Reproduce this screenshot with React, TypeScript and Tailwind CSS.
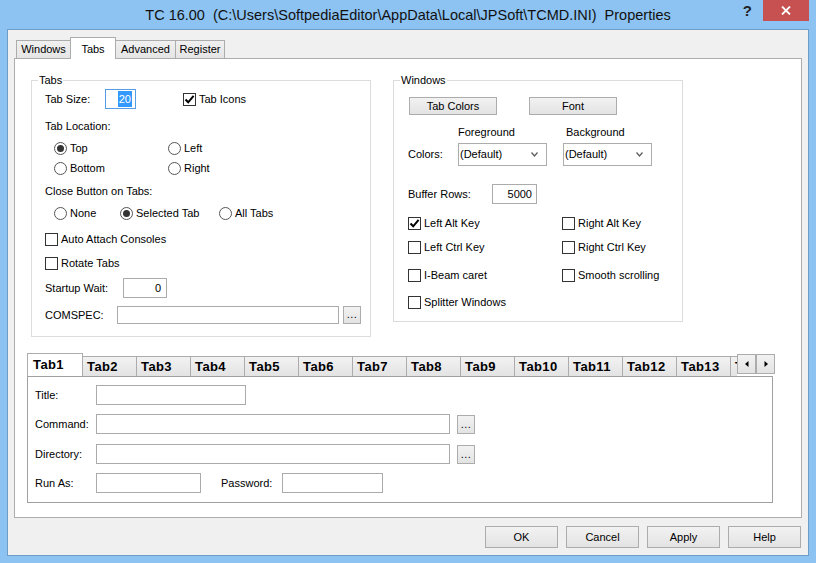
import React from 'react'

const inputCls = 'h-[20px] border border-[#ababab] bg-white'

function Check({ checked }: { checked?: boolean }) {
  return (
    <span className="flex h-[13px] w-[13px] shrink-0 items-center justify-center border border-[#333] bg-white">
      {checked && (
        <svg width="11" height="11" viewBox="0 0 11 11">
          <path d="M1.5 5.5 L4.2 8.3 L9.6 1.8" stroke="#000" strokeWidth="2" fill="none" />
        </svg>
      )}
    </span>
  )
}

function Radio({ checked }: { checked?: boolean }) {
  return (
    <span className="flex h-[13px] w-[13px] shrink-0 items-center justify-center rounded-full border border-[#555] bg-white">
      {checked && <span className="h-[7px] w-[7px] rounded-full bg-[#333]" />}
    </span>
  )
}

function CheckItem({ label, checked, className = '' }: { label: string; checked?: boolean; className?: string }) {
  return (
    <div className={`flex items-center gap-[3px] ${className}`}>
      <Check checked={checked} />
      <span>{label}</span>
    </div>
  )
}

function RadioItem({ label, checked, className = '' }: { label: string; checked?: boolean; className?: string }) {
  return (
    <div className={`flex items-center gap-[3px] ${className}`}>
      <Radio checked={checked} />
      <span>{label}</span>
    </div>
  )
}

function Btn({ children, className = '' }: { children: React.ReactNode; className?: string }) {
  return (
    <div
      className={`flex items-center justify-center border border-[#acacac] bg-linear-to-b from-[#f2f2f2] to-[#e3e3e3] ${className}`}
    >
      {children}
    </div>
  )
}

function Dots({ className = '' }: { className?: string }) {
  return (
    <Btn className={`w-[18px] items-end pb-[3px] leading-none ${className}`}>
      <span className="text-[11px] tracking-[0.5px]">...</span>
    </Btn>
  )
}

function Select({ value }: { value: string }) {
  return (
    <div className="flex h-[23px] w-[89px] items-center justify-between border border-[#acacac] bg-white pl-[1px] pr-[8px]">
      <span>{value}</span>
      <svg width="7" height="5" viewBox="0 0 7 5">
        <path d="M0.5 0.5 L3.5 4 L6.5 0.5" stroke="#606060" strokeWidth="1.3" fill="none" />
      </svg>
    </div>
  )
}

function Group({ title, className, children }: { title: string; className: string; children: React.ReactNode }) {
  return (
    <div className={`relative shrink-0 border border-[#dcdcdc] ${className}`}>
      <span className="absolute -top-[8px] left-[6px] bg-white px-[1px] leading-[14px]">{title}</span>
      {children}
    </div>
  )
}

const bottomTabs = ['Tab2', 'Tab3', 'Tab4', 'Tab5', 'Tab6', 'Tab7', 'Tab8', 'Tab9', 'Tab10', 'Tab11', 'Tab12', 'Tab13', 'Tab14']

export default function App() {
  return (
    <div className="flex h-[563px] w-[816px] flex-col overflow-hidden bg-[#8cc3f2] px-[7px] font-['Liberation_Sans',Arial,sans-serif] text-[11px] text-black">
      {/* title bar */}
      <div className="relative flex h-[29px] shrink-0 items-center justify-center pt-[3px]">
        <span className="whitespace-pre text-[14.5px] text-[#111]">
          {'TC 16.00  (C:\\Users\\SoftpediaEditor\\AppData\\Local\\JPSoft\\TCMD.INI)  Properties'}
        </span>
        <div className="absolute right-0 top-0 flex items-start">
          <span className="mr-[11px] mt-[2px] text-[15px] font-bold leading-[18px] text-[#222]">?</span>
          <div className="flex h-[21px] w-[46px] items-center justify-center bg-[#c75050]">
            <svg width="10" height="9" viewBox="0 0 10 9">
              <path d="M1 0.5 L9 8.5 M9 0.5 L1 8.5" stroke="#fff" strokeWidth="1.8" />
            </svg>
          </div>
        </div>
      </div>

      {/* client */}
      <div className="flex h-[527px] shrink-0 flex-col border border-[#6f9cc4] bg-[#f0f0f0] px-[6px]">
        {/* top tabs */}
        <div className="flex h-[28px] shrink-0 items-end pl-[2px]">
          <div className="flex h-[18px] w-[55px] items-center justify-center border border-b-0 border-[#acacac] bg-linear-to-b from-[#f0f0f0] to-[#e5e5e5]">
            Windows
          </div>
          <div className="relative z-10 -mb-[1px] -ml-[1px] flex h-[22px] w-[46px] items-start justify-center border border-b-0 border-[#acacac] bg-white pt-[3px]">
            Tabs
          </div>
          <div className="-ml-[1px] flex h-[18px] w-[61px] items-center justify-center border border-b-0 border-[#acacac] bg-linear-to-b from-[#f0f0f0] to-[#e5e5e5]">
            Advanced
          </div>
          <div className="-ml-[1px] flex h-[18px] w-[50px] items-center justify-center border border-b-0 border-[#acacac] bg-linear-to-b from-[#f0f0f0] to-[#e5e5e5]">
            Register
          </div>
        </div>

        {/* main panel */}
        <div className="flex h-[460px] shrink-0 flex-col border border-[#acacac] bg-white pt-[21px]">
          <div className="flex items-start gap-[22px] pl-[16px]">
            {/* Tabs group */}
            <Group title="Tabs" className="h-[257px] w-[340px] pl-[13px] pt-[8px]">
              <div className="flex h-[20px] items-center">
                <span className="w-[60px]">Tab Size:</span>
                <div className="flex h-[20px] w-[31px] items-center justify-end border border-[#569de5] bg-white pr-[3px]">
                  <span className="bg-[#3399ff] px-[1px] text-white">20</span>
                </div>
                <CheckItem label="Tab Icons" checked className="ml-[47px]" />
              </div>
              <div className="mt-[7px] flex h-[20px] items-center">Tab Location:</div>
              <div className="mt-[2px] flex h-[20px] items-center pl-[9px]">
                <RadioItem label="Top" checked className="w-[114px]" />
                <RadioItem label="Left" />
              </div>
              <div className="flex h-[20px] items-center pl-[9px]">
                <RadioItem label="Bottom" className="w-[114px]" />
                <RadioItem label="Right" />
              </div>
              <div className="mt-[3px] flex h-[20px] items-center">Close Button on Tabs:</div>
              <div className="mt-[2px] flex h-[20px] items-center pl-[9px]">
                <RadioItem label="None" className="w-[66px]" />
                <RadioItem label="Selected Tab" checked className="w-[99px]" />
                <RadioItem label="All Tabs" />
              </div>
              <CheckItem label="Auto Attach Consoles" className="mt-[6px] h-[20px]" />
              <CheckItem label="Rotate Tabs" className="mt-[4px] h-[20px]" />
              <div className="mt-[5px] flex h-[20px] items-center">
                <span className="w-[78px]">Startup Wait:</span>
                <div className={`${inputCls} flex w-[44px] items-center justify-end pr-[5px]`}>0</div>
              </div>
              <div className="mt-[8px] flex h-[18px] items-center">
                <span className="w-[72px]">COMSPEC:</span>
                <div className="h-[18px] w-[222px] border border-[#ababab] bg-white" />
                <Dots className="ml-[4px] h-[18px]" />
              </div>
            </Group>

            {/* Windows group */}
            <Group title="Windows" className="h-[242px] w-[290px] pl-[14px] pt-[16px]">
              <div className="flex pl-[1px]">
                <Btn className="h-[18px] w-[88px]">Tab Colors</Btn>
                <Btn className="ml-[32px] h-[18px] w-[88px]">Font</Btn>
              </div>
              <div className="mt-[10px] flex h-[14px] items-center pl-[50px]">
                <span className="w-[108px]">Foreground</span>
                <span>Background</span>
              </div>
              <div className="mt-[4px] flex items-center">
                <span className="w-[50px]">Colors:</span>
                <Select value="(Default)" />
                <div className="ml-[16px]">
                  <Select value="(Default)" />
                </div>
              </div>
              <div className="mt-[18px] flex h-[20px] items-center">
                <span className="w-[84px]">Buffer Rows:</span>
                <div className={`${inputCls} flex w-[45px] items-center justify-end pr-[4px]`}>5000</div>
              </div>
              <div className="mt-[11px] flex h-[16px] items-center">
                <CheckItem label="Left Alt Key" checked className="w-[154px]" />
                <CheckItem label="Right Alt Key" />
              </div>
              <div className="mt-[8px] flex h-[16px] items-center">
                <CheckItem label="Left Ctrl Key" className="w-[154px]" />
                <CheckItem label="Right Ctrl Key" />
              </div>
              <div className="mt-[12px] flex h-[16px] items-center">
                <CheckItem label="I-Beam caret" className="w-[154px]" />
                <CheckItem label="Smooth scrolling" />
              </div>
              <div className="mt-[11px] flex h-[16px] items-center">
                <CheckItem label="Splitter Windows" />
              </div>
            </Group>
          </div>

          {/* bottom tab control */}
          <div className="ml-[12px] mt-[16px] flex flex-col">
            <div className="flex h-[23px] items-end">
              <div className="flex h-[23px] w-[710px] items-end overflow-hidden text-[13px] font-bold tracking-[0.4px]">
                <div className="relative z-10 -mb-[1px] flex h-[24px] w-[56px] shrink-0 items-center border border-b-0 border-[#acacac] bg-white pb-[1px] pl-[5px]">
                  Tab1
                </div>
                {bottomTabs.map((t) => (
                  <div
                    key={t}
                    className="-ml-[1px] flex h-[20px] w-[55px] shrink-0 items-center border border-b-0 border-[#acacac] bg-linear-to-b from-[#f2f2f2] to-[#e3e3e3] pl-[4px] pt-[1px]"
                  >
                    {t}
                  </div>
                ))}
              </div>
              <div className="flex self-start pt-[1px]">
                <Btn className="h-[20px] w-[19px]">
                  <svg width="4" height="6" viewBox="0 0 4 6">
                    <path d="M3.5 0 L0 3 L3.5 6 Z" fill="#000" />
                  </svg>
                </Btn>
                <Btn className="h-[20px] w-[19px]">
                  <svg width="4" height="6" viewBox="0 0 4 6">
                    <path d="M0.5 0 L4 3 L0.5 6 Z" fill="#000" />
                  </svg>
                </Btn>
              </div>
            </div>
            <div className="h-[127px] w-[746px] border border-[#a0a0a0] bg-white pl-[7px] pt-[8px]">
              <div className="flex h-[20px] items-center">
                <span className="w-[61px]">Title:</span>
                <div className={`${inputCls} w-[150px]`} />
              </div>
              <div className="mt-[9px] flex h-[20px] items-center">
                <span className="w-[61px]">Command:</span>
                <div className={`${inputCls} w-[354px]`} />
                <Dots className="ml-[7px] h-[19px]" />
              </div>
              <div className="mt-[10px] flex h-[20px] items-center">
                <span className="w-[61px]">Directory:</span>
                <div className={`${inputCls} w-[354px]`} />
                <Dots className="ml-[7px] h-[19px]" />
              </div>
              <div className="mt-[9px] flex h-[20px] items-center">
                <span className="w-[61px]">Run As:</span>
                <div className={`${inputCls} w-[105px]`} />
                <span className="ml-[20px] w-[61px]">Password:</span>
                <div className={`${inputCls} w-[101px]`} />
              </div>
            </div>
          </div>
        </div>

        {/* dialog buttons */}
        <div className="mt-[8px] flex justify-end gap-[8px] pr-[1px]">
          <Btn className="h-[22px] w-[73px] border-[#3c7fb1]">OK</Btn>
          <Btn className="h-[22px] w-[73px]">Cancel</Btn>
          <Btn className="h-[22px] w-[73px]">Apply</Btn>
          <Btn className="h-[22px] w-[73px]">Help</Btn>
        </div>
      </div>
    </div>
  )
}
